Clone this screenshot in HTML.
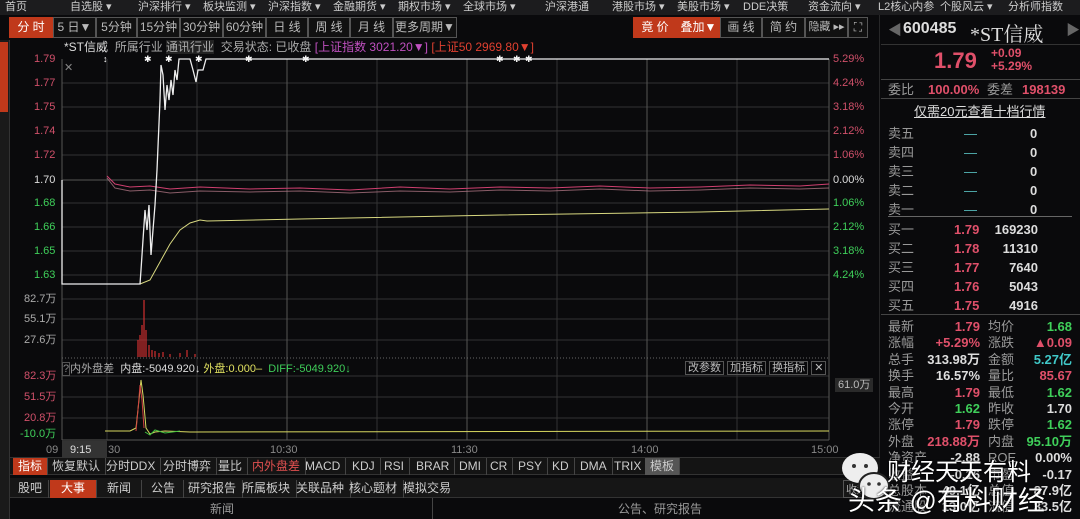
<!DOCTYPE html>
<html><head><meta charset="utf-8"><style>
*{margin:0;padding:0;box-sizing:border-box}
body{width:1080px;height:519px;background:#0a0a0c;overflow:hidden;position:relative;font-family:"Liberation Sans","Noto Sans CJK SC",sans-serif;color:#bbb}
.a{position:absolute;white-space:nowrap}
.top{left:0;top:0;width:1080px;height:15px;background:#1c1c1e;font-size:11px;color:#ccc;line-height:14px}
.tb{top:17px;height:21px;border:1px solid #555;background:#111;font-size:12px;line-height:19px;text-align:center;color:#bbb}
.red{background:#c0391b;color:#fff;border-color:#c0391b}
.r{color:#e0506a}.g{color:#3fcf5a}.w{color:#ddd}.y{color:#e0e060}.c{color:#40c8c8}
.lbl{font-size:11px;line-height:12px}
.tab{top:458px;height:17px;font-size:12px;line-height:16px;border-right:1px solid #444;padding:0 5px;color:#ccc}
.tab2{top:480px;height:18px;font-size:12px;line-height:17px;border-right:1px solid #444;padding:0 6px;color:#ccc}
.rp{font-size:13px;line-height:15px}
</style></head><body>
<div class="a top">
<span class="a" style="left:5px">首页</span><span class="a" style="left:70px">自选股 ▾</span><span class="a" style="left:138px">沪深排行 ▾</span><span class="a" style="left:203px">板块监测 ▾</span><span class="a" style="left:268px">沪深指数 ▾</span><span class="a" style="left:333px">金融期货 ▾</span><span class="a" style="left:398px">期权市场 ▾</span><span class="a" style="left:463px">全球市场 ▾</span><span class="a" style="left:545px">沪深港通</span><span class="a" style="left:612px">港股市场 ▾</span><span class="a" style="left:677px">美股市场 ▾</span><span class="a" style="left:743px">DDE决策</span><span class="a" style="left:808px">资金流向 ▾</span><span class="a" style="left:878px">L2核心内参</span><span class="a" style="left:940px">个股风云 ▾</span><span class="a" style="left:1008px">分析师指数</span>
</div>
<div class="a tb red" style="left:9px;width:44px">分 时</div>
<div class="a tb" style="left:53px;width:43px">5 日▼</div>
<div class="a tb" style="left:96px;width:41px">5分钟</div>
<div class="a tb" style="left:137px;width:43px">15分钟</div>
<div class="a tb" style="left:180px;width:43px">30分钟</div>
<div class="a tb" style="left:223px;width:43px">60分钟</div>
<div class="a tb" style="left:266px;width:42px">日 线</div>
<div class="a tb" style="left:308px;width:42px">周 线</div>
<div class="a tb" style="left:350px;width:43px">月 线</div>
<div class="a tb" style="left:393px;width:64px">更多周期▼</div>
<div class="a tb red" style="left:633px;width:44px">竟 价</div>
<div class="a tb red" style="left:677px;width:43px">叠加▼</div>
<div class="a tb" style="left:720px;width:42px">画 线</div>
<div class="a tb" style="left:762px;width:43px">简 约</div>
<div class="a tb" style="left:805px;width:43px;font-size:11px">隐藏 ▸▸</div>
<div class="a tb" style="left:848px;width:20px">⛶</div>
<div class="a" style="left:0;top:40px;width:10px;height:479px;background:#1a1a1a;border-right:1px solid #333"></div>
<div class="a" style="left:0;top:42px;width:8px;height:70px;background:#c0391b"></div>
<div class="a lbl" style="left:64px;top:41px;font-size:12px"><span class="w">*ST信威</span> &nbsp;<span style="color:#aaa">所属行业</span> <span style="color:#aaa;background:#222">通讯行业</span> &nbsp;<span style="color:#aaa">交易状态: 已收盘</span> <span style="color:#c050c0">[上证指数 3021.20▼]</span> <span style="color:#e04030">[上证50 2969.80▼]</span></div>
<svg class="a" style="left:0;top:0" width="880" height="460">
<g stroke="#333" stroke-width="1">
<line x1="62" y1="83" x2="829" y2="83"/><line x1="62" y1="107" x2="829" y2="107"/><line x1="62" y1="131" x2="829" y2="131"/><line x1="62" y1="155" x2="829" y2="155"/><line x1="62" y1="203" x2="829" y2="203"/><line x1="62" y1="227" x2="829" y2="227"/><line x1="62" y1="251" x2="829" y2="251"/><line x1="62" y1="275" x2="829" y2="275"/>
<line x1="62" y1="299" x2="829" y2="299"/><line x1="62" y1="319" x2="829" y2="319"/><line x1="62" y1="340" x2="829" y2="340"/>
<line x1="62" y1="376" x2="829" y2="376"/><line x1="62" y1="397" x2="829" y2="397"/><line x1="62" y1="418" x2="829" y2="418"/>
<line x1="107" y1="59" x2="107" y2="440"/><line x1="197" y1="59" x2="197" y2="440"/><line x1="377" y1="59" x2="377" y2="440"/><line x1="557" y1="59" x2="557" y2="440"/><line x1="737" y1="59" x2="737" y2="440"/>
</g>
<g stroke="#555" stroke-width="1">
<line x1="287" y1="59" x2="287" y2="440"/><line x1="467" y1="59" x2="467" y2="440"/><line x1="647" y1="59" x2="647" y2="440"/>
<line x1="62" y1="180" x2="829" y2="180"/>
<line x1="62" y1="59" x2="62" y2="440"/><line x1="829" y1="59" x2="829" y2="440"/><line x1="62" y1="440" x2="829" y2="440"/>
<line x1="62" y1="358" x2="829" y2="358" stroke="#666" stroke-dasharray="1 2"/>
<line x1="880" y1="15" x2="880" y2="519" stroke="#444"/>
</g>
<text x="64" y="71" fill="#888" font-size="11">✕</text>
<g fill="#fff" font-size="9"><text x="103" y="62">↕</text><text x="144" y="62">✱</text><text x="165" y="62">✱</text><text x="195" y="62">✱</text><text x="245" y="62">✱</text><text x="302" y="62">✱</text><text x="496" y="62">✱</text><text x="513" y="62">✱</text><text x="525" y="62">✱</text></g>
<path d="M107,176 L115,184 L130,187 L150,186 L170,189 L200,187 L250,189 L300,188 L350,190 L400,187 L450,189 L500,187 L550,188 L600,186 L650,188 L700,187 L750,185 L800,186 L829,184" stroke="#d04070" fill="none"/>
<path d="M107,178 L115,188 L130,191 L150,190 L170,193 L200,191 L250,192 L300,191 L350,193 L400,191 L450,192 L500,190 L550,191 L600,189 L650,191 L700,190 L750,188 L800,189 L829,188" stroke="#c08090" fill="none" opacity=".7"/>
<path d="M140,284 L150,280 L160,262 L170,244 L180,230 L190,223 L200,220 L207,221 L300,219 L500,215 L700,212 L829,209" stroke="#d8d880" fill="none"/>
<path d="M62,180 L62,284 L140,284 L141,270 L145,210 L147,230 L149,205 L151,255 L153,230 L155,205 L157,170 L160,100 L161,65 L163,75 L165,110 L167,85 L169,100 L171,80 L173,95 L175,70 L177,80 L179,59 L190,59 L193,70 L196,82 L198,70 L203,70 L206,59 L829,59" stroke="#eee" fill="none" stroke-width="1.3"/>
<g stroke="#d03030" stroke-width="1.2">
<line x1="138" y1="357" x2="138" y2="340"/><line x1="140" y1="357" x2="140" y2="335"/><line x1="142" y1="357" x2="142" y2="325"/><line x1="144" y1="357" x2="144" y2="300"/><line x1="146" y1="357" x2="146" y2="330"/><line x1="149" y1="357" x2="149" y2="345"/><line x1="152" y1="357" x2="152" y2="350"/><line x1="155" y1="357" x2="155" y2="351"/><line x1="159" y1="357" x2="159" y2="353"/><line x1="163" y1="357" x2="163" y2="352"/><line x1="170" y1="357" x2="170" y2="354"/><line x1="180" y1="357" x2="180" y2="353"/><line x1="187" y1="357" x2="187" y2="350"/><line x1="195" y1="357" x2="195" y2="354"/>
</g>
<path d="M105,431 L130,431 L136,428 L139,400 L141,380 L143,395 L146,428 L150,434 L155,432 L165,431 L190,432 L829,431" stroke="#d8d860" fill="none"/>
<path d="M136,431 L138,410 L140,385 L142,400 L144,428" stroke="#d04040" fill="none"/>
<path d="M145,432 L150,435 L155,430 L165,433 L180,431" stroke="#40c040" fill="none"/>
</svg>
<div class="a lbl" style="left:34px;top:53px;color:#d0506a">1.79</div>
<div class="a lbl" style="left:34px;top:77px;color:#d0506a">1.77</div>
<div class="a lbl" style="left:34px;top:101px;color:#d0506a">1.75</div>
<div class="a lbl" style="left:34px;top:125px;color:#d0506a">1.74</div>
<div class="a lbl" style="left:34px;top:149px;color:#d0506a">1.72</div>
<div class="a lbl" style="left:34px;top:174px;color:#ddd">1.70</div>
<div class="a lbl g" style="left:34px;top:197px">1.68</div>
<div class="a lbl g" style="left:34px;top:221px">1.66</div>
<div class="a lbl g" style="left:34px;top:245px">1.65</div>
<div class="a lbl g" style="left:34px;top:269px">1.63</div>
<div class="a lbl" style="left:24px;top:293px;color:#aaa">82.7万</div>
<div class="a lbl" style="left:24px;top:313px;color:#aaa">55.1万</div>
<div class="a lbl" style="left:24px;top:334px;color:#aaa">27.6万</div>
<div class="a lbl" style="left:24px;top:370px;color:#d0506a">82.3万</div>
<div class="a lbl" style="left:24px;top:391px;color:#d0506a">51.5万</div>
<div class="a lbl" style="left:24px;top:412px;color:#d0506a">20.8万</div>
<div class="a lbl g" style="left:20px;top:428px">-10.0万</div>
<div class="a lbl" style="left:833px;top:53px;color:#d0506a">5.29%</div>
<div class="a lbl" style="left:833px;top:77px;color:#d0506a">4.24%</div>
<div class="a lbl" style="left:833px;top:101px;color:#d0506a">3.18%</div>
<div class="a lbl" style="left:833px;top:125px;color:#d0506a">2.12%</div>
<div class="a lbl" style="left:833px;top:149px;color:#d0506a">1.06%</div>
<div class="a lbl w" style="left:833px;top:174px">0.00%</div>
<div class="a lbl g" style="left:833px;top:197px">1.06%</div>
<div class="a lbl g" style="left:833px;top:221px">2.12%</div>
<div class="a lbl g" style="left:833px;top:245px">3.18%</div>
<div class="a lbl g" style="left:833px;top:269px">4.24%</div>
<div class="a lbl" style="left:62px;top:363px;font-size:11px"><span style="color:#888;border:1px solid #555">?</span><span style="color:#aaa">内外盘差</span> &nbsp;<span class="w">内盘:-5049.920↓</span> <span class="y">外盘:0.000–</span> &nbsp;<span class="g">DIFF:-5049.920↓</span></div>
<div class="a lbl" style="left:685px;top:362px;color:#bbb;font-size:11px"><span style="border:1px solid #555;padding:0 2px">改参数</span> <span style="border:1px solid #555;padding:0 2px">加指标</span> <span style="border:1px solid #555;padding:0 2px">换指标</span> <span style="border:1px solid #555;padding:0 2px">✕</span></div>
<div class="a lbl" style="left:835px;top:378px;background:#2a2a2a;color:#bbb;padding:1px 3px">61.0万</div>
<div class="a lbl" style="left:46px;top:444px;color:#888">09</div>
<div class="a lbl" style="left:62px;top:441px;width:45px;height:16px;background:#333;color:#ddd;padding:3px 0 0 8px">9:15</div>
<div class="a lbl" style="left:108px;top:444px;color:#888">30</div>
<div class="a lbl" style="left:270px;top:444px;color:#888">10:30</div>
<div class="a lbl" style="left:451px;top:444px;color:#888">11:30</div>
<div class="a lbl" style="left:631px;top:444px;color:#888">14:00</div>
<div class="a lbl" style="left:811px;top:444px;color:#888">15:00</div>
<div class="a" style="left:10px;top:457px;width:870px;height:18px;background:#141414;border-top:1px solid #333;border-bottom:1px solid #333"></div>
<div class="a tab" style="left:13px;background:#c0391b;color:#fff">指标</div>
<div class="a tab" style="left:47px">恢复默认</div>
<div class="a tab" style="left:101px">分时DDX</div>
<div class="a tab" style="left:158px">分时博弈</div>
<div class="a tab" style="left:213px">量比</div>
<div class="a tab" style="left:247px;color:#e05050">内外盘差</div>
<div class="a tab" style="left:300px">MACD</div>
<div class="a tab" style="left:347px">KDJ</div>
<div class="a tab" style="left:379px">RSI</div>
<div class="a tab" style="left:411px">BRAR</div>
<div class="a tab" style="left:454px">DMI</div>
<div class="a tab" style="left:485px">CR</div>
<div class="a tab" style="left:513px">PSY</div>
<div class="a tab" style="left:547px">KD</div>
<div class="a tab" style="left:575px">DMA</div>
<div class="a tab" style="left:609px">TRIX</div>
<div class="a tab" style="left:645px;background:#555">模板</div>
<div class="a" style="left:10px;top:478px;width:870px;height:20px;background:#161616;border-bottom:1px solid #333"></div>
<div class="a tab2" style="left:12px">股吧</div>
<div class="a tab2" style="left:50px;background:#c0391b;color:#fff;padding:0 11px">大事</div>
<div class="a tab2" style="left:97px;padding:0 10px">新闻</div>
<div class="a tab2" style="left:143px;padding:0 8px">公告</div>
<div class="a tab2" style="left:182px">研究报告</div>
<div class="a tab2" style="left:236px">所属板块</div>
<div class="a tab2" style="left:290px">关联品种</div>
<div class="a tab2" style="left:343px">核心题材</div>
<div class="a tab2" style="left:397px;border:none">模拟交易</div>
<div class="a" style="left:210px;top:500px;font-size:12px;color:#999">新闻</div>
<div class="a" style="left:432px;top:498px;width:1px;height:21px;background:#444"></div>
<div class="a" style="left:618px;top:500px;font-size:12px;color:#999">公告、研究报告</div>
<div class="a" style="left:843px;top:480px;font-size:11px;color:#aaa;border:1px solid #555;padding:0 2px">收起</div>
<!-- right panel -->
<div class="a" style="left:888px;top:20px;color:#666;font-size:14px">◀</div>
<div class="a" style="left:903px;top:20px;color:#ddd;font-size:16px;font-weight:bold">600485</div>
<div class="a" style="left:970px;top:18px;color:#ddd;font-size:20px;font-family:'Liberation Serif','Noto Serif CJK SC',serif">*ST信威</div>
<div class="a" style="left:1066px;top:20px;color:#666;font-size:14px">▶</div>
<div class="a" style="left:881px;top:44px;width:199px;height:1px;background:#333"></div>
<div class="a r" style="left:934px;top:48px;font-size:22px;font-weight:bold">1.79</div>
<div class="a r" style="left:991px;top:47px;font-size:12px;font-weight:bold;line-height:13px">+0.09<br>+5.29%</div>
<div class="a" style="left:881px;top:79px;width:199px;height:1px;background:#444"></div>
<div class="a rp" style="left:888px;top:82px;color:#999">委比</div>
<div class="a rp r" style="left:928px;top:82px;font-weight:bold">100.00%</div>
<div class="a rp" style="left:987px;top:82px;color:#999">委差</div>
<div class="a rp r" style="left:1022px;top:82px;font-weight:bold">198139</div>
<div class="a" style="left:881px;top:98px;width:199px;height:1px;background:#444"></div>
<div class="a" style="left:914px;top:101px;font-size:13px;color:#ddd;text-decoration:underline">仅需20元查看十档行情</div>
<div class="a rp" style="left:888px;top:124px;color:#999;line-height:19px">卖五<br>卖四<br>卖三<br>卖二<br>卖一</div>
<div class="a rp" style="left:964px;top:124px;color:#5bb;line-height:19px">—<br>—<br>—<br>—<br>—</div>
<div class="a rp w" style="left:1030px;top:124px;line-height:19px;font-weight:bold">0<br>0<br>0<br>0<br>0</div>
<div class="a" style="left:888px;top:216px;width:184px;height:1px;background:#666"></div>
<div class="a rp" style="left:888px;top:220px;color:#999;line-height:19px">买一<br>买二<br>买三<br>买四<br>买五</div>
<div class="a rp r" style="left:954px;top:220px;line-height:19px;font-weight:bold">1.79<br>1.78<br>1.77<br>1.76<br>1.75</div>
<div class="a rp w" style="left:993px;top:220px;line-height:19px;font-weight:bold;text-align:right;width:45px">169230<br>11310<br>7640<br>5043<br>4916</div>
<div class="a" style="left:881px;top:314px;width:199px;height:1px;background:#444"></div>
<div class="a rp" style="left:888px;top:319px;color:#999;line-height:16.4px">最新<br>涨幅<br>总手<br>换手<br>最高<br>今开<br>涨停<br>外盘<br>净资产<br>收益<br>总股本<br>流通股</div>
<div class="a rp" style="left:918px;top:319px;width:62px;text-align:right;line-height:16.4px;font-weight:bold"><span class="r">1.79</span><br><span class="r">+5.29%</span><br><span class="w">313.98万</span><br><span class="w">16.57%</span><br><span class="r">1.79</span><br><span class="g">1.62</span><br><span class="r">1.79</span><br><span class="r">218.88万</span><br><span class="w">-2.88</span><br><span class="w">-0.16</span><br><span class="w">49.1亿</span><br><span class="w">13.0亿</span></div>
<div class="a rp" style="left:988px;top:319px;color:#999;line-height:16.4px">均价<br>涨跌<br>金额<br>量比<br>最低<br>昨收<br>跌停<br>内盘<br>ROE<br>市盈<br>总值<br>流值</div>
<div class="a rp" style="left:1010px;top:319px;width:62px;text-align:right;line-height:16.4px;font-weight:bold"><span class="g">1.68</span><br><span class="r">▲0.09</span><br><span class="c">5.27亿</span><br><span class="r">85.67</span><br><span class="g">1.62</span><br><span class="w">1.70</span><br><span class="g">1.62</span><br><span class="g">95.10万</span><br><span class="w">0.00%</span><br><span class="w">-0.17</span><br><span class="w">87.9亿</span><br><span class="w">33.5亿</span></div>
<!-- watermark -->
<svg class="a" style="left:838px;top:450px" width="60" height="56">
<ellipse cx="22" cy="18" rx="18" ry="15" fill="#eee"/><circle cx="16" cy="16" r="2" fill="#333"/><circle cx="28" cy="16" r="2" fill="#333"/>
<ellipse cx="36" cy="36" rx="15" ry="13" fill="#eee" stroke="#222" stroke-width="2"/><circle cx="31" cy="34" r="1.8" fill="#333"/><circle cx="41" cy="34" r="1.8" fill="#333"/>
</svg>
<div class="a" style="left:887px;top:452px;font-size:24px;color:#fff;text-shadow:0 0 2px #000">财经天天有料</div>
<div class="a" style="left:848px;top:479px;font-size:27px;color:#fff;text-shadow:0 0 2px #000">头条 @有料财经</div>
</body></html>
